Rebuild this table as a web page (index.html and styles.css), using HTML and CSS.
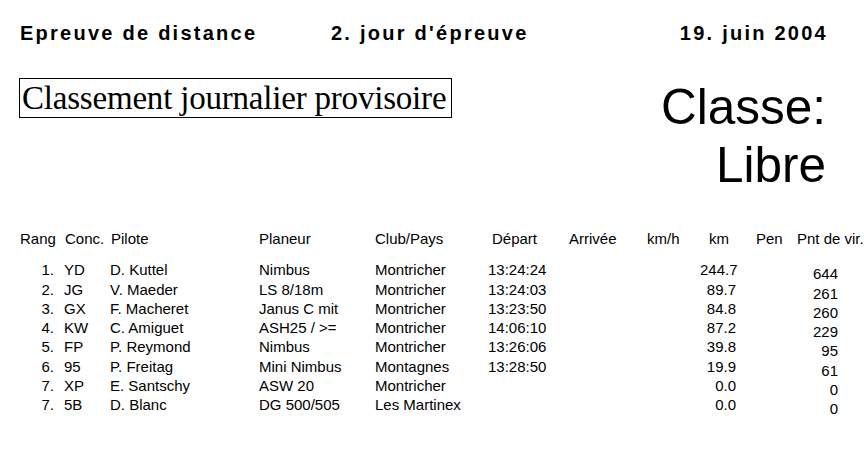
FILE: index.html
```html
<!DOCTYPE html>
<html lang="fr">
<head>
<meta charset="utf-8">
<title>Classement journalier provisoire</title>
<link rel="stylesheet" href="styles.css">
</head>
<body>
<div class="page">
  <header class="top">
    <div class="t1">Epreuve de distance</div>
    <div class="t2">2. jour d'épreuve</div>
    <div class="t3">19. juin 2004</div>
  </header>
  <section class="titles">
    <div class="boxed">Classement journalier provisoire</div>
    <div class="classe">Classe:<br>Libre</div>
  </section>
  <div class="grid">
    <div class="h">Rang</div><div class="h p1">Conc.</div><div class="h p1">Pilote</div><div class="h">Planeur</div><div class="h">Club/Pays</div><div class="h dep">Départ</div><div class="h">Arrivée</div><div class="h">km/h</div><div class="h kmh">km</div><div class="h pen">Pen</div><div class="h">Pnt de vir.</div>

    <div class="r rk">1.</div><div class="r">YD</div><div class="r">D. Kuttel</div><div class="r">Nimbus</div><div class="r">Montricher</div><div class="r">13:24:24</div><div class="r"></div><div class="r"></div><div class="r km">244.7</div><div class="r"></div><div class="r pnt">644</div>
    <div class="r rk">2.</div><div class="r">JG</div><div class="r">V. Maeder</div><div class="r">LS 8/18m</div><div class="r">Montricher</div><div class="r">13:24:03</div><div class="r"></div><div class="r"></div><div class="r km">89.7</div><div class="r"></div><div class="r pnt">261</div>
    <div class="r rk">3.</div><div class="r">GX</div><div class="r">F. Macheret</div><div class="r">Janus C mit</div><div class="r">Montricher</div><div class="r">13:23:50</div><div class="r"></div><div class="r"></div><div class="r km">84.8</div><div class="r"></div><div class="r pnt">260</div>
    <div class="r rk">4.</div><div class="r">KW</div><div class="r">C. Amiguet</div><div class="r">ASH25 / &gt;=</div><div class="r">Montricher</div><div class="r">14:06:10</div><div class="r"></div><div class="r"></div><div class="r km">87.2</div><div class="r"></div><div class="r pnt">229</div>
    <div class="r rk">5.</div><div class="r">FP</div><div class="r">P. Reymond</div><div class="r">Nimbus</div><div class="r">Montricher</div><div class="r">13:26:06</div><div class="r"></div><div class="r"></div><div class="r km">39.8</div><div class="r"></div><div class="r pnt">95</div>
    <div class="r rk">6.</div><div class="r">95</div><div class="r">P. Freitag</div><div class="r">Mini Nimbus</div><div class="r">Montagnes</div><div class="r">13:28:50</div><div class="r"></div><div class="r"></div><div class="r km">19.9</div><div class="r"></div><div class="r pnt">61</div>
    <div class="r rk">7.</div><div class="r">XP</div><div class="r">E. Santschy</div><div class="r">ASW 20</div><div class="r">Montricher</div><div class="r"></div><div class="r"></div><div class="r"></div><div class="r km">0.0</div><div class="r"></div><div class="r pnt">0</div>
    <div class="r rk">7.</div><div class="r">5B</div><div class="r">D. Blanc</div><div class="r">DG 500/505</div><div class="r">Les Martinex</div><div class="r"></div><div class="r"></div><div class="r"></div><div class="r km">0.0</div><div class="r"></div><div class="r pnt">0</div>
  </div>
</div>
</body>
</html>
```
FILE: styles.css
```css
html, body {
  margin: 0;
  padding: 0;
  background: #ffffff;
  color: #000000;
}
.page {
  width: 864px;
  height: 458px;
  overflow: hidden;
  font-family: "Liberation Sans", Arial, sans-serif;
}
.top {
  display: grid;
  grid-template-columns: 311px 1fr auto;
  padding: 21px 36px 0 20px;
  font-weight: bold;
  font-size: 20px;
  letter-spacing: 2.25px;
  line-height: 24px;
}
.titles {
  display: flex;
  justify-content: space-between;
  align-items: flex-start;
  padding: 33px 38px 0 19px;
}
.boxed {
  border: 1px solid #000;
  font-family: "Liberation Serif", "Times New Roman", serif;
  font-size: 33px;
  line-height: 38px;
  letter-spacing: -0.2px;
  width: 428px;
  padding: 0 1px 0 2px;
  white-space: nowrap;
  overflow: hidden;
}
.classe {
  font-size: 49.5px;
  line-height: 58px;
  text-align: right;
  margin-top: 0;
}
.grid {
  display: grid;
  grid-template-columns: 44px 46px 149px 116px 113px 81px 78px 53px 40px 57px 67px;
  margin: 35px 0 0 20px;
  font-size: 15px;
  line-height: 19.3px;
  white-space: nowrap;
}
.h {
  margin-bottom: 12px;
}
.p1 { padding-left: 1px; }
.dep { padding-left: 4px; }
.kmh { padding-left: 9px; }
.pen { padding-left: 16px; }
.rk { text-align: right; padding-right: 10px; }
.km { text-align: right; padding-right: 4px; }
.pnt { text-align: right; padding-right: 26px; position: relative; top: 4px; }
```
